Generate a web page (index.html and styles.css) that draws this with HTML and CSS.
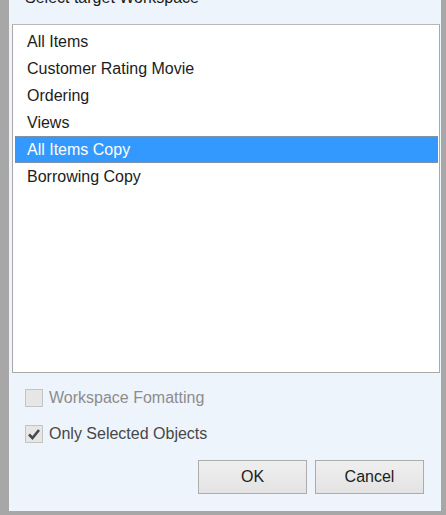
FILE: index.html
```html
<!DOCTYPE html>
<html>
<head>
<meta charset="utf-8">
<title>Select target Workspace</title>
<link rel="stylesheet" href="styles.css">
</head>
<body>
<div class="frame">
  <div class="dialog">
    <div class="header"><span class="title">Select target Workspace</span></div>
    <div class="list">
      <div class="item">All Items</div>
      <div class="item">Customer Rating Movie</div>
      <div class="item">Ordering</div>
      <div class="item">Views</div>
      <div class="item selected">All Items Copy</div>
      <div class="item">Borrowing Copy</div>
    </div>
    <div class="options">
      <label class="check disabled">
        <span class="box"></span>
        <span class="label">Workspace Fomatting</span>
      </label>
      <label class="check">
        <span class="box checked">
          <svg viewBox="0 0 18 18" width="18" height="18"><path d="M4 9.5 L7.5 13 L14 5" fill="none" stroke="#4a4a4a" stroke-width="2.6"/></svg>
        </span>
        <span class="label">Only Selected Objects</span>
      </label>
    </div>
    <div class="buttons">
      <button class="btn">OK</button>
      <button class="btn">Cancel</button>
    </div>
  </div>
</div>
</body>
</html>
```
FILE: styles.css
```css
html, body {
  margin: 0;
  padding: 0;
  height: 100%;
}
body {
  background: #a7a7a7;
  font-family: "Liberation Sans", Arial, sans-serif;
  font-size: 16px;
  color: #1c1c1c;
}
.frame {
  width: 446px;
  height: 515px;
  box-sizing: border-box;
  padding: 0 5px 4px 9px;
  display: flex;
}
.dialog {
  flex: 1;
  background: #eef4fc;
  display: flex;
  flex-direction: column;
}
.header {
  height: 24px;
  display: flex;
  align-items: flex-end;
  padding: 0 0 17px 16px;
  box-sizing: border-box;
  overflow: hidden;
  line-height: 18px;
}
.title {
  color: #1a1a1a;
  white-space: nowrap;
}
.list {
  margin: 0 1px 0 3px;
  height: 349px;
  box-sizing: border-box;
  border: 1px solid #a9a9a9;
  border-top-color: #b8b8b8;
  background: #ffffff;
  padding: 3px 1px 0 2px;
  display: flex;
  flex-direction: column;
}
.item {
  height: 27px;
  line-height: 27px;
  padding-left: 12px;
  box-sizing: border-box;
  white-space: nowrap;
}
.item.selected {
  background: #3399ff;
  color: #ffffff;
  border-top: 1px solid #8092a8;
  border-bottom: 1px solid #8092a8;
  line-height: 25px;
}
.options {
  padding: 16px 0 0 16px;
  display: flex;
  flex-direction: column;
  gap: 18px;
}
.check {
  display: flex;
  align-items: center;
  gap: 6px;
  height: 18px;
  color: #474747;
}
.check.disabled {
  color: #8c8c8c;
}
.box {
  width: 18px;
  height: 18px;
  box-sizing: border-box;
  border: 1px solid #c4c4c4;
  background: #e6e6e6;
  display: flex;
}
.box svg {
  margin: -1px;
}
.buttons {
  margin-top: auto;
  padding: 0 17px 17px 0;
  display: flex;
  justify-content: flex-end;
  gap: 8px;
}
.btn {
  width: 109px;
  height: 34px;
  font-family: "Liberation Sans", Arial, sans-serif;
  font-size: 16px;
  color: #1c1c1c;
  border: 1px solid #acacac;
  background: linear-gradient(#efefef, #e3e3e3);
  padding: 0;
}
```
